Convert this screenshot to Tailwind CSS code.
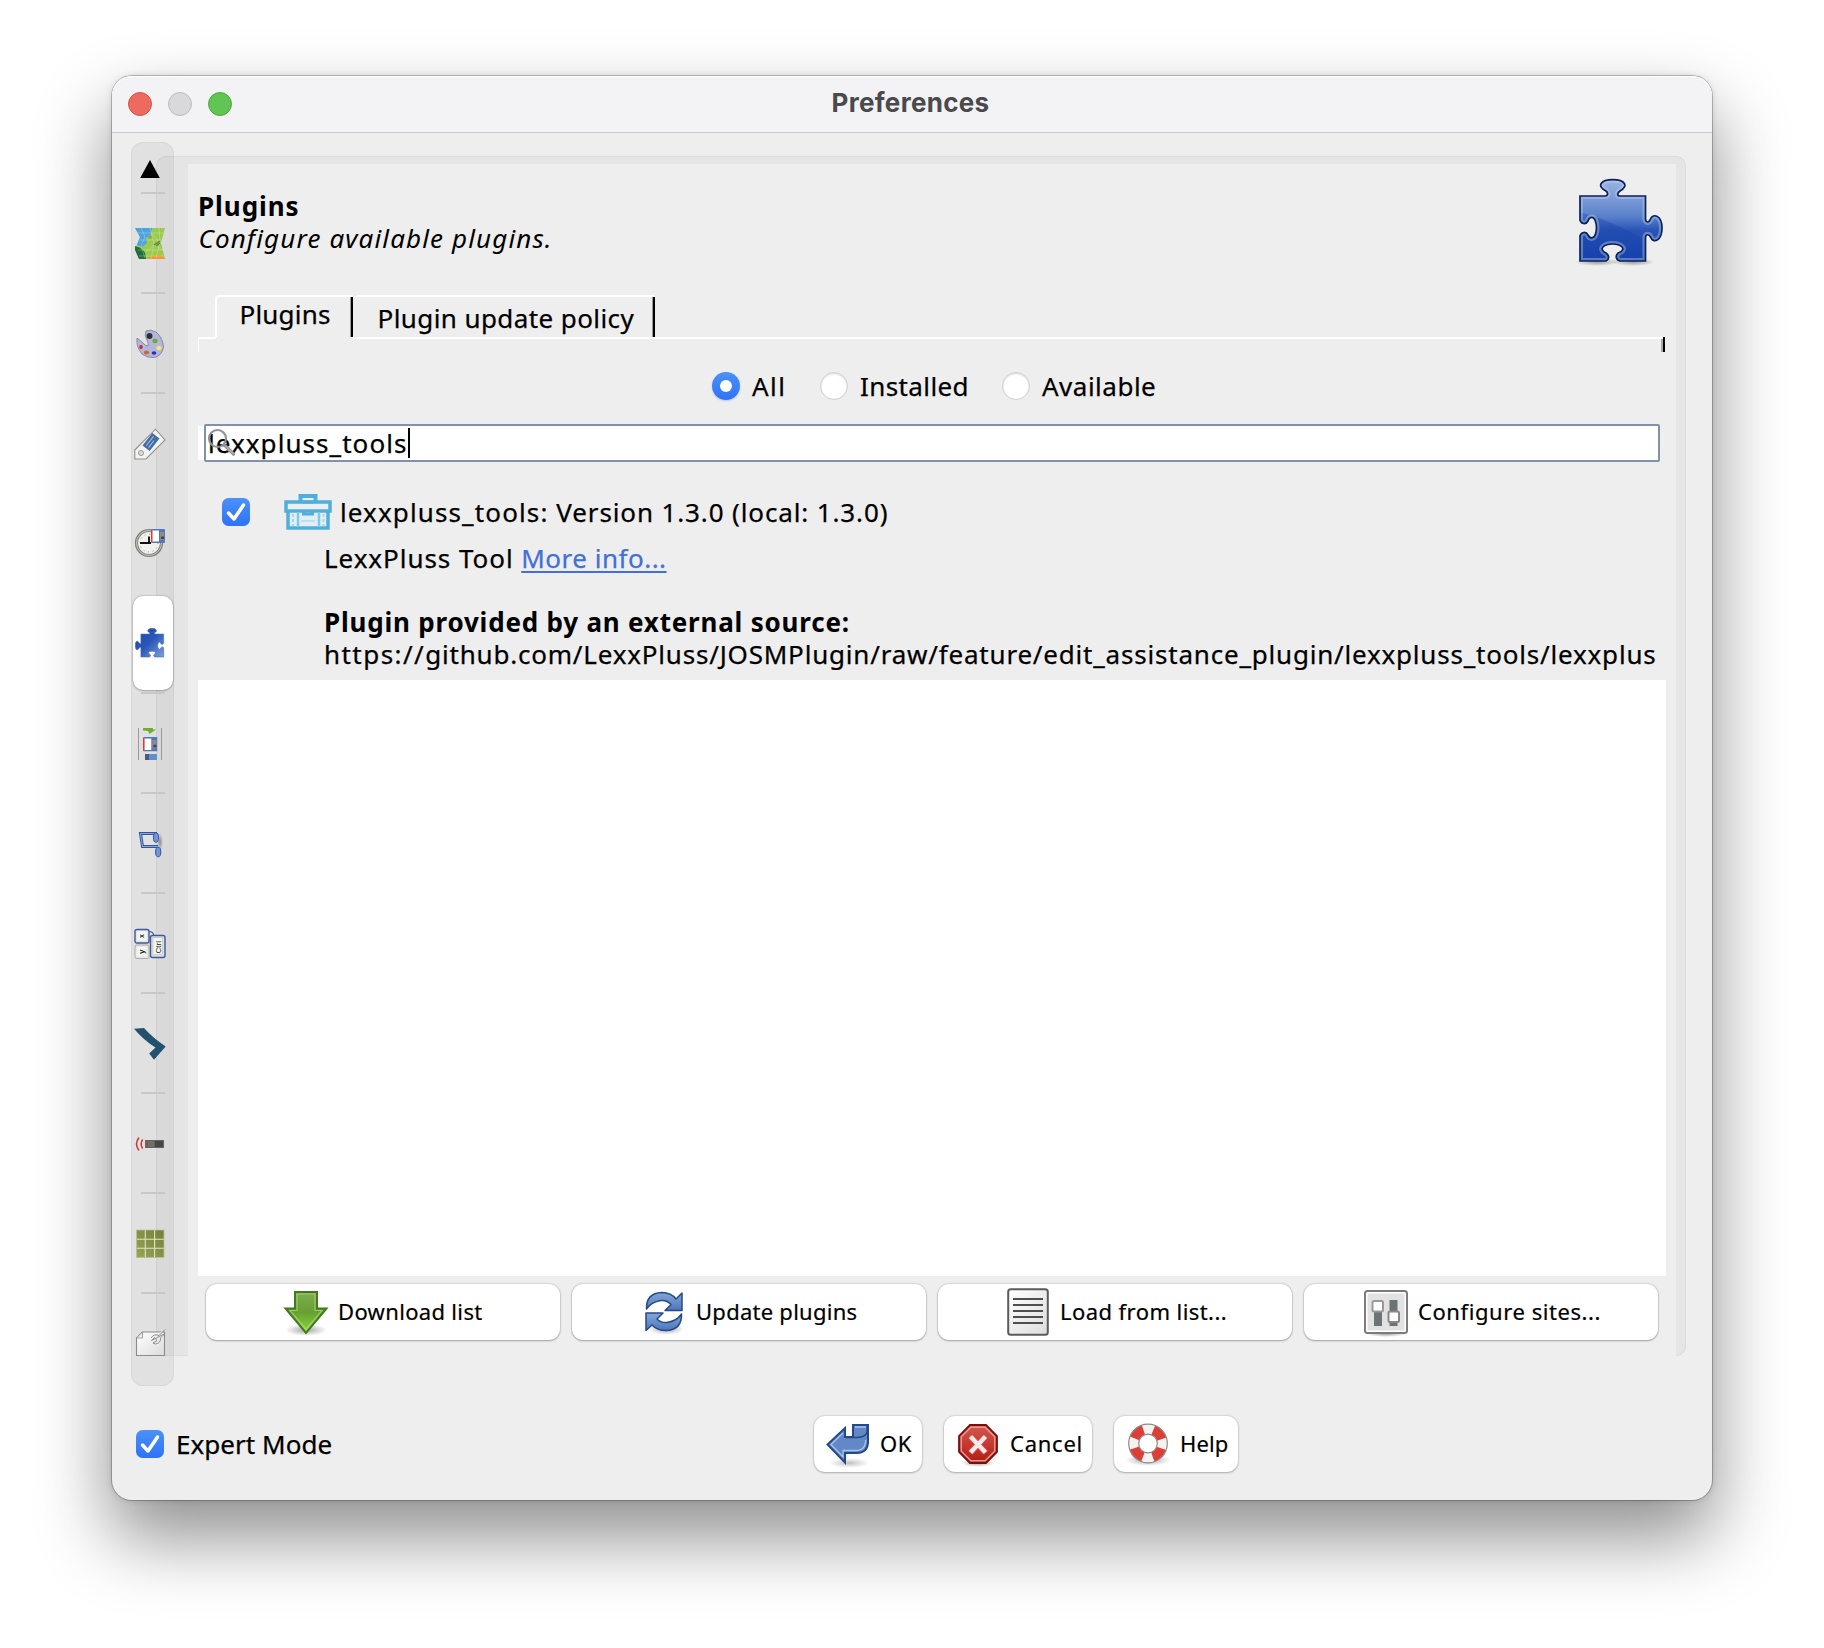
<!DOCTYPE html>
<html lang="en">
<head>
<meta charset="utf-8">
<title>Preferences</title>
<script src="https://cdn.jsdelivr.net/npm/@tailwindcss/browser@4"></script>
</head>
<body class="w-[1824px] h-[1648px] bg-white overflow-hidden pt-[76px] pl-[112px] font-['Noto_Sans',sans-serif] text-[26px] leading-8 text-black whitespace-nowrap">
<svg class="absolute w-0 h-0">
  <defs>
    <linearGradient id="pz" x1="0" y1="0" x2="0" y2="1"><stop offset="0" stop-color="#9db4e2"/><stop offset=".45" stop-color="#5a81cb"/><stop offset=".62" stop-color="#2a55b6"/><stop offset="1" stop-color="#1943ab"/></linearGradient>
    <linearGradient id="pzs" x1="1" y1="0" x2="0" y2="1"><stop offset="0" stop-color="#1b46ad"/><stop offset=".5" stop-color="#2a57b8"/><stop offset="1" stop-color="#7fa0da"/></linearGradient>
    <linearGradient id="gr" x1="0" y1="0" x2="0" y2="1"><stop offset="0" stop-color="#7fae50"/><stop offset=".5" stop-color="#66a033"/><stop offset="1" stop-color="#8cdb3c"/></linearGradient>
    <linearGradient id="pg" x1="0" y1="0" x2="1" y2="1"><stop offset="0" stop-color="#ffffff"/><stop offset="1" stop-color="#dcdcdc"/></linearGradient>
    <linearGradient id="bl" x1="0" y1="0" x2="0" y2="1"><stop offset="0" stop-color="#86a5d8"/><stop offset="1" stop-color="#4a78bd"/></linearGradient>
    <linearGradient id="rd" x1="0" y1="0" x2="0" y2="1"><stop offset="0" stop-color="#cf5a52"/><stop offset=".5" stop-color="#c43a31"/><stop offset="1" stop-color="#b01c12"/></linearGradient>
    <linearGradient id="ol" x1="1" y1="0" x2="0" y2="1"><stop offset="0" stop-color="#737f3a"/><stop offset="1" stop-color="#97a656"/></linearGradient>
    <radialGradient id="sh"><stop offset="0" stop-color="#000" stop-opacity=".35"/><stop offset="1" stop-color="#000" stop-opacity="0"/></radialGradient>
    <path id="pzp" d="M1 17H26C29 17 29.500 14 27 12C17 7 22 .7 33.700 .7C46 .7 50 7 41 12C38 14 38 17 41 17H66.500V40C67 44 70 44 71.500 40C74 34 83 36 83 49C83 62 74 65 71.500 58C70 55 67 55 66.500 58V82H41C37 81 36 77 39 74C43 73 45 70 43 68C39 64 28 64 24 68C22 70 24 73 27 74C31 77 30 81 27 82H1V57C2 53 7 52 9 56C11 60 15 60 16.500 55C18 50 18 46 16 41C14 37 10 38 9 42C7 46 2 45 1 41Z"/>
    <clipPath id="pzc"><use href="#pzp"/></clipPath>
    <symbol id="floppy" viewBox="0 0 14 14"><rect width="14" height="14" rx="1" fill="#5577b5"/><rect x="1" y="1.500" width="7" height="11" fill="#fff"/><rect x="0" y="1.500" width="1.500" height="11" fill="#e03c28"/><rect x="9" y="3" width="4" height="8" fill="#8d8d8d"/><rect x="10" y="7.500" width="3" height="2.500" fill="#444"/></symbol>
  </defs>
</svg>

<div class="w-[1600px] h-[1424px] rounded-[20px] bg-[#eeeeee] shadow-[0_0_0_1px_rgba(0,0,0,0.22),0_0_6px_rgba(0,0,0,0.15),0_36px_72px_2px_rgba(0,0,0,0.44)]">
  <!-- title bar -->
  <div class="h-[57px] rounded-t-[20px] bg-[#f3f2f5] border-b-[1.5px] border-[#c9c9c9] shadow-[inset_0_1px_0_#fff] flex items-center pl-4 gap-4">
    <div class="size-6 rounded-full bg-[#ed6a5e] border border-[#d3564b]"></div>
    <div class="size-6 rounded-full bg-[#d9d9dc] border border-[#bcbcbf]"></div>
    <div class="size-6 rounded-full bg-[#61c554] border border-[#50a843]"></div>
    <div class="flex-1 text-center pr-[139px] -mt-[2px] font-[Inter,sans-serif] font-bold text-[26px] tracking-[0.3px] text-[#4a494b]">Preferences</div>
  </div>

  <div class="flex pt-[9px] pl-[19px]">
    <!-- section tabs -->
    <nav class="relative z-10 w-[43px] h-[1244px] -mr-[18px] rounded-[12px] bg-black/5 shadow-[inset_0_0_2px_rgba(0,0,0,0.12)]">
      <div class="h-[50px] pt-[18px] pl-[9px]"><svg width="20" height="18" viewBox="0 0 20 18"><path d="M10 0L19.800 18H.2Z"/></svg></div>
      <div class="h-[2px] w-6 ml-[10px] bg-[#c8c8c8]"></div>
      <div class="h-[98px] pt-[34px] pl-[3px]"><svg width="32" height="32" viewBox="0 0 32 32"><path d="M1 0H31L27 15L31 31H5L1 21L6 9Z" fill="#9aca4f"/><path d="M1 0H18L17 6L12 10L13 15L8 19L3 17L6 9Z" fill="#4ba3e3"/><path d="M1 18Q9 20 11 25L12 31H5L1 22Z" fill="#1f6e3f"/><path d="M14 31L16 28L28 27L31 31Z" fill="#f19836"/><path d="M14 10Q19 4 21 9T28 15M12 24L20 17L29 22M7 0L11 9L7 18L11 30M16 0L20 15L17 31M25 0L26 15L22 30M3 5H29M5 12H28M4 22H29M5 28H30" fill="none" stroke="#e4f3b4" stroke-width=".6" opacity=".55"/><path d="M20 17L26 13M22 18L26 15" stroke="#667b4c" stroke-width="1.300"/><circle cx="16" cy="9" r="1.700" fill="#8c9b68"/></svg></div>
      <div class="h-[2px] w-6 ml-[10px] bg-[#c8c8c8]"></div>
      <div class="h-[98px] pt-[34px] pl-[3px]"><svg width="32" height="32" viewBox="0 0 32 32"><path d="M3 10Q2 19 8 26Q13 30 20 29.500Q28 28 29.500 19Q29 10 22 4Q17 1 12 3Q10 7 13 12Q15 16 14 18Q11 18 9 15Z" fill="#b5b5db" stroke="#77778f" stroke-width=".8"/><circle cx="15.500" cy="8" r="3" fill="#2b3036"/><ellipse cx="21" cy="13" rx="2.600" ry="2.200" fill="#6caa2e"/><ellipse cx="25" cy="20" rx="2.600" ry="2.200" fill="#f8e46a"/><ellipse cx="20" cy="25" rx="2.400" ry="1.800" fill="#2a31b5"/><ellipse cx="12.500" cy="24.500" rx="2.600" ry="1.900" fill="#c86a25"/><ellipse cx="7" cy="19" rx="1.700" ry="2.100" fill="#c4262a"/></svg></div>
      <div class="h-[2px] w-6 ml-[10px] bg-[#c8c8c8]"></div>
      <div class="h-[98px] pt-[34px] pl-[3px]"><svg width="32" height="32" viewBox="0 0 32 32"><path d="M.8 22L21.500 1.200L31 12L12 31H.8Z" fill="#f3f3f0" stroke="#90908c" stroke-width="1.100"/><circle cx="7" cy="25" r="2.500" fill="#ddd" stroke="#999"/><g transform="rotate(-52 17 14)"><rect x="9" y="9.500" width="16" height="9" fill="#426ca6"/><path d="M11 12.500H23M11 15.500H20" stroke="#a9c0df" stroke-width="1"/></g></svg></div>
      <div class="h-[2px]"></div>
      <div class="h-[98px] pt-[33px] pl-[3px]"><svg width="32" height="32" viewBox="0 0 32 32"><circle cx="15" cy="16" r="12.500" fill="#f1f1ee" stroke="#7e7e7a" stroke-width="3.200"/><circle cx="15" cy="16" r="12.500" fill="none" stroke="#c9c9c6" stroke-width="1"/><circle cx="15" cy="16" r="9" fill="none" stroke="#888" stroke-dasharray="1 3.700"/><path d="M6 16H17M15 17V9.500" stroke="#111" stroke-width="1.900"/><use href="#floppy" x="17" y="2" width="14" height="14"/></svg></div>
      <div class="h-[100px] pt-[4px] pl-[2px]"><div class="w-10 h-[94px] rounded-[10px] bg-white shadow-[0_0_2px_rgba(0,0,0,0.35),0_1px_2px_rgba(0,0,0,0.2)] pt-[32px] pl-[2px]"><svg width="30" height="30" viewBox="0 0 86 86"><g transform="rotate(-90 42 42)"><use href="#pzp" fill="url(#pzs)" stroke="#4a6fb5" stroke-width="2"/></g></svg></div></div>
      <div class="h-[2px] w-6 ml-[10px] bg-[#c8c8c8]"></div>
      <div class="h-[98px] pt-[34px] pl-[3px]"><svg width="32" height="32" viewBox="0 0 32 32"><path d="M4.500 0V32M27.500 0V32" stroke="#999" stroke-width="1"/><path d="M9 0H19V1.500H22L15.500 6L14 3L9 2.500Z" fill="#6fae33"/><use href="#floppy" x="9" y="9" width="14.500" height="14.500"/><rect x="11" y="26" width="4" height="6" fill="#4a5c7a"/><rect x="15" y="26" width="8" height="6" fill="#5e8fd0"/></svg></div>
      <div class="h-[2px] w-6 ml-[10px] bg-[#c8c8c8]"></div>
      <div class="h-[98px] pt-[34px] pl-[3px]"><svg width="32" height="32" viewBox="0 0 32 32"><ellipse cx="26" cy="14" rx="3" ry="9" fill="url(#sh)"/><path d="M23 5.500H6.500L8.500 18.500H24" fill="none" stroke="#35559a" stroke-width="3"/><path d="M23 5.500H6.500L8.500 18.500H24" fill="none" stroke="#84a4e0" stroke-width="1.100"/><ellipse cx="22" cy="9.500" rx="2.600" ry="4.800" fill="#7195d8" stroke="#35559a"/><ellipse cx="24.200" cy="24" rx="2.600" ry="4.800" fill="#7195d8" stroke="#35559a"/></svg></div>
      <div class="h-[2px] w-6 ml-[10px] bg-[#c8c8c8]"></div>
      <div class="h-[98px] pt-[34px] pl-[3px]"><svg width="32" height="32" viewBox="0 0 32 32" font-family="Liberation Sans,sans-serif" font-weight="bold" fill="#222"><rect x="1" y="17" width="14" height="13.500" rx="2" fill="#e9e9e5" stroke="#aaa"/><rect x="1" y="1.500" width="14" height="13.500" rx="2" fill="#e4e4e0" stroke="#3b5b9c" stroke-width="1.400"/><rect x="16.500" y="7.500" width="14.500" height="22" rx="2" fill="#dededa" stroke="#3b5b9c" stroke-width="1.400"/><rect x="19" y="9.500" width="9.500" height="17" fill="#f6f6f3" stroke="#bbb" stroke-width=".6"/><rect x="3.500" y="3.500" width="9" height="9" fill="#f6f6f3"/><rect x="3.500" y="19" width="9" height="9" fill="#f6f6f3"/><path d="M15 3.500Q19 3.500 20 7.500" fill="none" stroke="#3b5b9c" stroke-width="1.200"/><text transform="translate(10 10) rotate(-90)" font-size="7">x</text><text transform="translate(10 26) rotate(-90)" font-size="8">y</text><text transform="translate(26.500 25.500) rotate(-90)" font-size="8" font-weight="normal">Ctrl</text></svg></div>
      <div class="h-[2px] w-6 ml-[10px] bg-[#c8c8c8]"></div>
      <div class="h-[98px] pt-[34px] pl-[3px]"><svg width="32" height="32" viewBox="0 0 32 32"><path d="M0 .7L10 0Q19 10 31.700 18.500L20 31.700L15.200 25.500L21.500 19.500Q10 12.500 0 .7Z" fill="#24516d"/></svg></div>
      <div class="h-[2px] w-6 ml-[10px] bg-[#c8c8c8]"></div>
      <div class="h-[98px] pt-[34px] pl-[3px]"><svg width="32" height="32" viewBox="0 0 32 32"><path d="M5 9.500Q0 16 5 22.500M8.700 11.500Q5.500 16 8.700 20.500" fill="none" stroke="#c23a34" stroke-width="1.500"/><rect x="11" y="12" width="19" height="8" fill="#646464"/><rect x="21" y="13" width="8" height="6" fill="#464646"/><circle cx="13" cy="16" r="1" fill="#d33"/><path d="M14.500 14H20M14.500 16H20M14.500 18H20" stroke="#8a8f7c" stroke-width="1" stroke-dasharray="1 1"/></svg></div>
      <div class="h-[2px] w-6 ml-[10px] bg-[#c8c8c8]"></div>
      <div class="h-[98px] pt-[34px] pl-[3px]"><svg width="32" height="32" viewBox="0 0 32 32"><rect x="2.500" y="2" width="27.500" height="27.500" fill="url(#ol)"/><path d="M11.300 2V29.500M20.600 2V29.500M2.500 11.300H30M2.500 20.300H30" stroke="#dfe3c8" stroke-width="1.100"/><rect x="2.500" y="2" width="27.500" height="27.500" fill="none" stroke="#b9c08f" stroke-width=".8"/></svg></div>
      <div class="h-[2px] w-6 ml-[10px] bg-[#c8c8c8]"></div>
      <div class="h-[98px] pt-[34px] pl-[3px]"><svg width="32" height="32" viewBox="0 0 32 32"><path d="M8.500 4H30.500V27.500H2.500V10Z" fill="url(#pg)" stroke="#8b8b8b" stroke-width="1.100"/><path d="M8.500 4V10H2.500Z" fill="#eee" stroke="#999" stroke-width=".9"/><path d="M17 10Q20 5.500 25 7.500L31 1.500M31 5.500L26.500 10Q27 15 21.500 16L19 15L23 12.500L20.500 9.500L17.500 12.500Z" fill="#ecece8" stroke="#8e8e8a" stroke-width="1"/></svg></div>
    </nav>

    <!-- page panel -->
    <div class="mt-[14px] w-[1530px] h-[1200px] pt-2 pl-8 pr-[10px] bg-[#e5e5e5] rounded-tl-[10px] rounded-r-[10px] shadow-[inset_0_0_0_1px_#dcdcdc]">
      <div class="h-[1192px] bg-[#eeeeee] pl-[10px]">
        <header class="h-[131px] pt-[26px] flex justify-between">
          <div>
            <div class="font-bold tracking-[0.95px]">Plugins</div>
            <div class="italic tracking-[1.13px] pl-[0.5px]">Configure available plugins.</div>
          </div>
          <svg class="-mt-[11px] mr-[10px] overflow-visible" width="87" height="86" viewBox="0 0 87 86">
            <ellipse cx="18" cy="83" rx="22" ry="4" fill="url(#sh)"/><ellipse cx="54" cy="83" rx="22" ry="4" fill="url(#sh)"/>
            <use href="#pzp" fill="url(#pz)"/>
            <g clip-path="url(#pzc)"><path d="M0 33Q35 42 67 62L85 66V90H0Z" fill="#1440ac" opacity=".35"/><use href="#pzp" fill="none" stroke="#c3d2f0" stroke-width="6" opacity=".4"/></g>
            <use href="#pzp" fill="none" stroke="#0b2255" stroke-width="1.700"/>
          </svg>
        </header>

        <!-- tab strip -->
        <div class="flex h-[42px] pl-[17px] [-webkit-text-stroke:0.25px]">
          <div class="w-[138px] rounded-tl-[4px] border-t-2 border-l-2 border-white flex justify-between"><span class="pl-[22.500px] pt-[1px] tracking-[0.2px]">Plugins</span><i class="w-[3px] bg-black border-l border-[#9a9a9a]"></i></div>
          <div class="ml-[2px] w-[300px] rounded-tl-[4px] border-t-2 border-white flex justify-between"><span class="pl-[22.500px] pt-[5px] tracking-[0.416px]">Plugin update policy</span><i class="w-[3px] bg-black border-l border-[#9a9a9a]"></i></div>
        </div>
        <div class="flex h-[2px]"><i class="w-[18px] bg-white"></i><i class="w-[137px]"></i><i class="w-[1310px] bg-white"></i><i class="w-[2px] bg-black"></i></div>
        <div class="flex justify-between h-[13px] w-[1467px] border-l border-white"><i></i><i class="w-[4px] bg-black border-l-2 border-[#a8a8a8]"></i></div>

        <!-- filter -->
        <div class="flex h-[72px] pt-[18px] pl-[514px] [-webkit-text-stroke:0.25px]">
          <div class="flex items-center h-8 w-[108px] gap-[12px]"><span class="size-7 rounded-full bg-gradient-to-b from-[#4b91f7] to-[#2f72f6] grid place-items-center shadow-[0_1px_2px_rgba(47,114,246,0.3)]"><i class="size-3 rounded-full bg-white"></i></span><span class="tracking-[1.5px]">All</span></div>
          <div class="flex items-center h-8 w-[182px] gap-[12px]"><span class="size-7 rounded-full bg-white border border-[#cfcfcf] shadow-[inset_0_1px_2px_rgba(0,0,0,0.15)]"></span><span class="tracking-[0.4px]">Installed</span></div>
          <div class="flex items-center h-8 gap-[12px]"><span class="size-7 rounded-full bg-white border border-[#cfcfcf] shadow-[inset_0_1px_2px_rgba(0,0,0,0.15)]"></span><span class="tracking-[0.5px]">Available</span></div>
        </div>

        <!-- search field -->
        <div class="h-[38px] flex items-center [-webkit-text-stroke:0.25px]">
          <i class="w-[6px] h-[34px] bg-white"></i>
          <div class="relative w-[1456px] h-[38px] border-2 border-[#8391a6] rounded-[2px] bg-white flex items-center pl-[2px]">
            <span class="tracking-[1.06px]">lexxpluss_tools</span><i class="w-[2px] h-[30px] bg-black"></i>
            <svg class="absolute left-[1px] top-[2px]" width="29" height="29" viewBox="0 0 29 29" fill="none"><path d="M17.500 17L26.500 26" stroke="#8f8f8f" stroke-width="3.200" stroke-linecap="round"/><path d="M18.500 18L26 25.500" stroke="#d0cfc8" stroke-width="1" stroke-linecap="round"/><circle cx="10.500" cy="10.500" r="8.500" stroke="#919191" stroke-width="2.200"/></svg>
          </div>
        </div>

        <!-- plugin entry -->
        <div class="h-[218px] pt-[32px] pl-[24px]">
          <div class="flex items-center h-[36px]">
            <svg width="28" height="28" viewBox="0 0 28 28"><defs><linearGradient id="cb" x1="0" y1="0" x2="0" y2="1"><stop offset="0" stop-color="#4b91f7"/><stop offset="1" stop-color="#2f72f6"/></linearGradient></defs><rect width="28" height="28" rx="6.500" fill="url(#cb)"/><path d="M6.500 15L12 21L21.500 7" fill="none" stroke="#fff" stroke-width="3.500" stroke-linecap="round" stroke-linejoin="round"/></svg>
            <svg class="ml-[34px]" width="48" height="36" viewBox="0 0 48 36" fill="none" stroke="#50aedd" stroke-width="3.500"><path d="M16.500 8V2H31.500V8" stroke-width="4"/><rect x="4" y="16" width="40" height="18" fill="#e2eef4"/><rect x="2" y="8" width="44" height="9" fill="#e9eff2"/><path d="M14 18V33M35 18V33" stroke="#7fc9e8" stroke-width="2.500"/><path d="M9 20V32M39.500 20V32" stroke="#a3d8ee" stroke-width="2" stroke-dasharray="3 2"/><path d="M17 8H31" stroke-width="3"/><path d="M19.500 17V20H28.500V17" stroke-width="3"/><path d="M17 27H31" stroke="#b8e0f1" stroke-width="2"/></svg>
            <span class="ml-[8px] [-webkit-text-stroke:0.25px] tracking-[0.87px]"><span class="tracking-[1.120px]">lexxpluss_tools: </span>Version 1.3.0 (local: 1.3.0)</span>
          </div>
          <div class="pl-[102px] pt-[12px] w-[1434px] overflow-hidden">
            <div class="tracking-[0.950px] [-webkit-text-stroke:0.25px]">LexxPluss Tool <span class="text-[#4170d8] tracking-[0.5px] underline underline-offset-[3px] decoration-2">More info...</span></div>
            <div class="pt-8 font-bold tracking-[0.800px]">Plugin provided by an external source:</div>
            <div class="tracking-[0.797px] [-webkit-text-stroke:0.25px]"><span class="tracking-[1.450px]">https://</span>github.com/LexxPluss/JOSMPlugin/raw/feature/edit_assistance_plugin/lexxpluss_tools/lexxpluss_tools.jar</div>
          </div>
        </div>

        <div class="w-[1468px] h-[596px] bg-white"></div>

        <!-- list actions -->
        <div class="flex gap-3 pt-2 pl-2 text-[22px] [-webkit-text-stroke:0.2px]">
          <div class="w-[354px] h-14 rounded-[11px] bg-white shadow-[0_0_2px_rgba(0,0,0,0.3),0_1px_2px_rgba(0,0,0,0.25)] flex items-center pl-[78px]">
            <svg class="overflow-visible mt-[2px]" width="44" height="46" viewBox="0 0 44 46"><ellipse cx="22" cy="40" rx="21" ry="6" fill="url(#sh)"/><path d="M11 2H33V18.500H42.500L22 43L1.500 18.500H11Z" fill="url(#gr)" stroke="#447820" stroke-width="2"/><path d="M13 4H31V20.500H38L22 39.500L6 20.500H13Z" fill="none" stroke="#b9e08a" stroke-width="1.200" opacity=".6"/></svg>
            <span class="ml-[10px] -mt-[2px] tracking-[0.33px]">Download list</span>
          </div>
          <div class="w-[354px] h-14 rounded-[11px] bg-white shadow-[0_0_2px_rgba(0,0,0,0.3),0_1px_2px_rgba(0,0,0,0.25)] flex items-center pl-[73px]">
            <svg class="overflow-visible" width="38" height="42" viewBox="0 0 38 42" stroke="#264a85" stroke-width="1.500" stroke-linejoin="round"><ellipse cx="21" cy="38" rx="18" ry="6" fill="url(#sh)" stroke="none"/><path d="M1.500 18Q1 2 17 1.500Q26 1.500 31 8L37 2V19.500H20L26 13.500Q22 9 16 9.500Q6 11 1.500 18Z" fill="url(#bl)"/><path d="M36.500 23Q37 39 21 39.500Q12 39.500 7 34L1 39.500V22H18L12 28Q16 32 22 31.500Q32 30 36.500 23Z" fill="url(#bl)"/></svg>
            <span class="ml-[13px] -mt-[2px] tracking-[0.257px]">Update plugins</span>
          </div>
          <div class="w-[354px] h-14 rounded-[11px] bg-white shadow-[0_0_2px_rgba(0,0,0,0.3),0_1px_2px_rgba(0,0,0,0.25)] flex items-center pl-[69px]">
            <svg width="42" height="48" viewBox="0 0 42 48"><rect x="1.200" y="1.200" width="39.600" height="45.600" rx="2.500" fill="url(#pg)" stroke="#5b5b58" stroke-width="2"/><path d="M6 11H36M6 17H36M6 23H36M6 29H36M6 35H36" stroke="#4e4e4e" stroke-width="2"/></svg>
            <span class="ml-[11px] -mt-[2px] tracking-[0.43px]">Load from list...</span>
          </div>
          <div class="w-[354px] h-14 rounded-[11px] bg-white shadow-[0_0_2px_rgba(0,0,0,0.3),0_1px_2px_rgba(0,0,0,0.25)] flex items-center pl-[60px]">
            <svg class="overflow-visible" width="44" height="44" viewBox="0 0 44 44"><ellipse cx="22" cy="44" rx="20" ry="3" fill="url(#sh)"/><rect x="1" y="1" width="42" height="42" rx="2.500" fill="#fff" stroke="#7c7c7c" stroke-width="2"/><rect x="3.500" y="3.500" width="37" height="37" fill="#e2e2e2"/><path d="M14 12V36M29.500 10V36" stroke="#6d7374" stroke-width="8"/><rect x="8.500" y="11" width="10.500" height="10.500" rx="1.500" fill="#fff" stroke="#999" stroke-width="2"/><rect x="24.500" y="21.500" width="10.500" height="10.500" rx="1.500" fill="#fff" stroke="#888" stroke-width="2"/></svg>
            <span class="ml-[10px] -mt-[2px] tracking-[0.57px]">Configure sites...</span>
          </div>
        </div>
      </div>
    </div>
  </div>

  <!-- footer -->
  <div class="flex pt-[30px] pl-6">
    <div class="flex items-center h-14 w-[678px]">
      <svg width="28" height="28" viewBox="0 0 28 28"><rect width="28" height="28" rx="6.500" fill="url(#cb)"/><path d="M6.500 15L12 21L21.500 7" fill="none" stroke="#fff" stroke-width="3.500" stroke-linecap="round" stroke-linejoin="round"/></svg>
      <span class="ml-[12px] tracking-[0.05px] [-webkit-text-stroke:0.25px]">Expert Mode</span>
    </div>
    <div class="flex text-[22px] [-webkit-text-stroke:0.2px]">
      <div class="w-[108px] h-14 rounded-[11px] bg-white shadow-[0_0_2px_rgba(0,0,0,0.3),0_1px_2px_rgba(0,0,0,0.2)] flex items-center pl-[12px]">
        <svg class="overflow-visible" width="44" height="44" viewBox="0 0 44 44"><ellipse cx="23" cy="41" rx="20" ry="5" fill="url(#sh)" opacity=".7"/><path d="M27 3H42V21Q41 31 31 31H19V40.500L1.500 22.500L19 6V15H27Z" fill="#6288c8" stroke="#264a85" stroke-width="2"/><path d="M41 4V10Q40 15 31 15.500H20" fill="none" stroke="#264a85" stroke-width="1.400"/><path d="M29 5H40" stroke="#a9c2ea" stroke-width="1.500"/><path d="M17 11L5 22.500L17 35V28.500H31Q38 28 39.500 21V18" fill="none" stroke="#a9c2ea" stroke-width="1.300"/></svg>
        <span class="ml-[10px] -mt-[2px] tracking-[0.6px]">OK</span>
      </div>
      <div class="ml-[22px] w-[148px] h-14 rounded-[11px] bg-white shadow-[0_0_2px_rgba(0,0,0,0.3),0_1px_2px_rgba(0,0,0,0.2)] flex items-center pl-[14px]">
        <svg class="overflow-visible" width="40" height="40" viewBox="0 0 40 40"><ellipse cx="20" cy="39" rx="17" ry="4" fill="url(#sh)"/><path d="M12 1H28L39 12V28L28 39H12L1 28V12Z" fill="url(#rd)" stroke="#7c0e0a" stroke-width="1.800"/><path d="M12.800 3.300H27.200L36.700 12.800V27.200L27.200 36.700H12.800L3.300 27.200V12.800Z" fill="none" stroke="#e79a94" stroke-width="1.400"/><path d="M12.500 12.500L27.500 28.500M27.500 12.500L12.500 28.500" stroke="#f03c34" stroke-width="6.500"/><path d="M12.500 12.500L27.500 28.500M27.500 12.500L12.500 28.500" stroke="#f0ecec" stroke-width="4.500"/></svg>
        <span class="ml-[12px] -mt-[2px] tracking-[0.75px]">Cancel</span>
      </div>
      <div class="ml-[22px] w-[124px] h-14 rounded-[11px] bg-white shadow-[0_0_2px_rgba(0,0,0,0.3),0_1px_2px_rgba(0,0,0,0.2)] flex items-center pl-[12px]">
        <svg class="overflow-visible" width="44" height="42" viewBox="0 0 44 42"><ellipse cx="22" cy="37" rx="23" ry="6" fill="url(#sh)"/><circle cx="22" cy="20.500" r="14.300" fill="#fff" stroke="#f3f3f1" stroke-width="10"/><circle cx="22" cy="20.500" r="14.300" fill="none" stroke="#dd3e36" stroke-width="10" stroke-dasharray="12.460 10" transform="rotate(20 22 20.500)"/><circle cx="22" cy="20.500" r="19.300" fill="none" stroke="#8b8b87" stroke-width="1.200"/><circle cx="22" cy="20.500" r="9.300" fill="#fff" stroke="#8b8b87" stroke-width="1.200"/></svg>
        <span class="ml-[10px] -mt-[2px] tracking-[0.1px]">Help</span>
      </div>
    </div>
  </div>
</div>
</body>
</html>
